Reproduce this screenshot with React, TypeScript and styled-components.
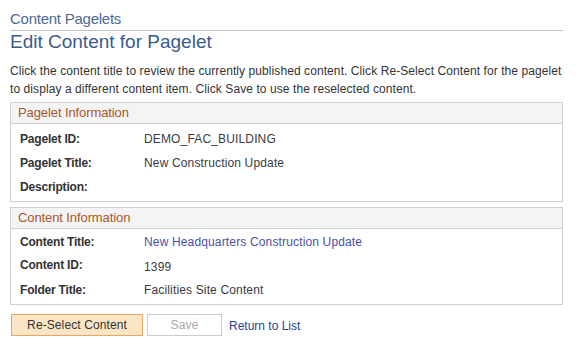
import React from "react";
import styled, { createGlobalStyle } from "styled-components";

const Global = createGlobalStyle`
  html, body { margin: 0; padding: 0; background: #ffffff; }
  body { font-family: "Liberation Sans", Arial, sans-serif; color: #333333; }
`;

const Page = styled.div`
  width: 579px;
  height: 348px;
  box-sizing: border-box;
  padding: 10px 16px 0 10px;
  overflow: hidden;
`;

const Breadcrumb = styled.div`
  font-size: 15px;
  line-height: 18px;
  letter-spacing: -0.25px;
  color: #4d6a98;
  padding-bottom: 2px;
  border-bottom: 1px solid #c4c4c8;
`;

const Title = styled.h1`
  margin: 0;
  font-size: 19px;
  font-weight: normal;
  line-height: 22px;
  color: #3b5b8d;
`;

const Intro = styled.p`
  margin: 9px 0 4px 0;
  font-size: 12px;
  line-height: 18px;
  letter-spacing: 0.08px;
  white-space: nowrap;
  color: #333333;
`;

const Box = styled.section<{ $gap?: number }>`
  border: 1px solid #cfcfd6;
  margin-top: ${(p) => p.$gap ?? 0}px;
  padding-bottom: 2px;
`;

const BoxHeader = styled.div`
  height: 20px;
  line-height: 20px;
  background: #f4f4f4;
  border-bottom: 1px solid #cfcfd6;
  padding-left: 7px;
  font-size: 13px;
  letter-spacing: -0.1px;
  color: #a8572a;
`;

const Rows = styled.div<{ $top: number }>`
  padding-top: ${(p) => p.$top}px;
`;

const Row = styled.div<{ $h: number }>`
  display: grid;
  grid-template-columns: 124px 1fr;
  height: ${(p) => p.$h}px;
  line-height: 24px;
  padding-left: 9px;
  font-size: 12px;
`;

const Label = styled.div`
  font-weight: bold;
  letter-spacing: -0.2px;
  color: #333333;
`;

const Value = styled.div<{ $dy?: number }>`
  color: #3a3a44;
  letter-spacing: 0.15px;
  padding-top: ${(p) => p.$dy ?? 0}px;
`;

const Link = styled.a<{ $color?: string }>`
  color: ${(p) => p.$color ?? "#4a4fa8"};
  text-decoration: none;
  cursor: pointer;
`;

const ButtonBar = styled.div`
  display: flex;
  align-items: center;
  margin-top: 9px;
  padding-left: 1px;
`;

const Button = styled.button<{ $primary?: boolean; $w: number }>`
  box-sizing: border-box;
  width: ${(p) => p.$w}px;
  height: 22px;
  margin: 0 4px 0 0;
  padding: 0;
  font-family: "Liberation Sans", Arial, sans-serif;
  font-size: 12px;
  line-height: 20px;
  letter-spacing: 0.1px;
  border: 1px solid ${(p) => (p.$primary ? "#e5a866" : "#cccccc")};
  background: ${(p) => (p.$primary ? "#fce5c4" : "#ffffff")};
  color: ${(p) => (p.$primary ? "#333333" : "#a9a9a9")};
  border-radius: 0;
`;

const ReturnLink = styled(Link)`
  font-size: 12px;
  margin-left: 3px;
  padding-top: 2px;
`;

export default function App() {
  return (
    <>
      <Global />
      <Page>
        <Breadcrumb>Content Pagelets</Breadcrumb>
        <Title>Edit Content for Pagelet</Title>
        <Intro>
          Click the content title to review the currently published content. Click Re-Select Content for the pagelet
          <br />
          to display a different content item. Click Save to use the reselected content.
        </Intro>
        <Box>
          <BoxHeader>Pagelet Information</BoxHeader>
          <Rows $top={3}>
            <Row $h={24}>
              <Label>Pagelet ID:</Label>
              <Value>DEMO_FAC_BUILDING</Value>
            </Row>
            <Row $h={24}>
              <Label>Pagelet Title:</Label>
              <Value>New Construction Update</Value>
            </Row>
            <Row $h={24}>
              <Label>Description:</Label>
              <Value></Value>
            </Row>
          </Rows>
        </Box>
        <Box $gap={5}>
          <BoxHeader>Content Information</BoxHeader>
          <Rows $top={1}>
            <Row $h={23}>
              <Label>Content Title:</Label>
              <Value>
                <Link>New Headquarters Construction Update</Link>
              </Value>
            </Row>
            <Row $h={25}>
              <Label>Content ID:</Label>
              <Value $dy={2}>1399</Value>
            </Row>
            <Row $h={24}>
              <Label>Folder Title:</Label>
              <Value>Facilities Site Content</Value>
            </Row>
          </Rows>
        </Box>
        <ButtonBar>
          <Button $primary $w={132}>Re-Select Content</Button>
          <Button $w={75}>Save</Button>
          <ReturnLink $color="#1f3f95">Return to List</ReturnLink>
        </ButtonBar>
      </Page>
    </>
  );
}
